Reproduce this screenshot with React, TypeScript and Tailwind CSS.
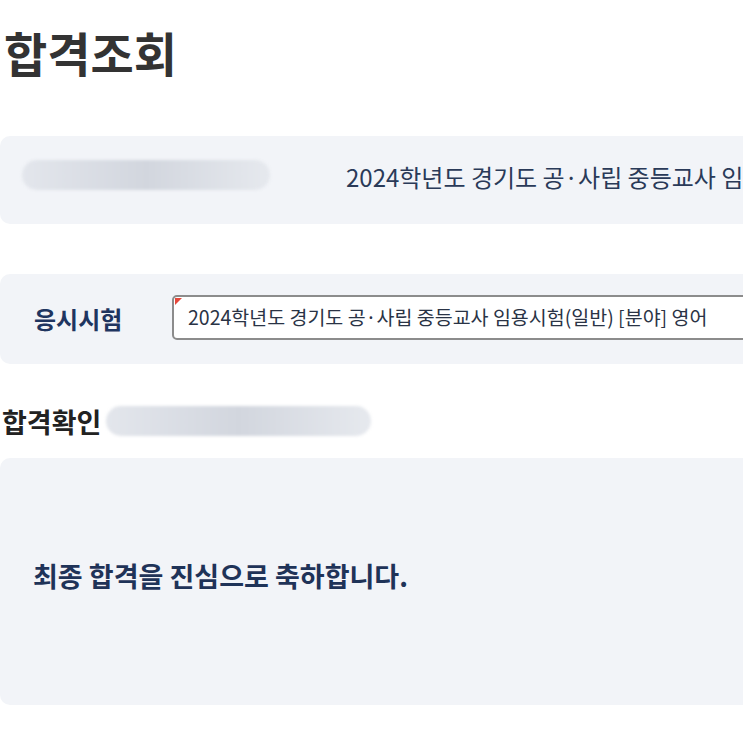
const font = { fontFamily: '"Noto Sans CJK KR", "Noto Sans", sans-serif' }

function Blur({ className }: { className: string }) {
  return (
    <div
      className={
        "rounded-full bg-gradient-to-r from-[#e3e6ec] via-[#d2d6de] to-[#e6e9ee] blur-[1.5px] " +
        className
      }
    />
  )
}

export default function App() {
  const exam = "2024학년도 경기도 공·사립 중등교사 임용시험(일반) [분야] 영어"

  return (
    <div className="w-[743px] h-[743px] overflow-hidden bg-white" style={font}>
      <div className="w-[1100px]">
        {/* 제목 */}
        <h1 className="pt-[28px] pl-[4px] text-[47px] leading-none font-bold text-[#333333]">
          합격조회
        </h1>

        {/* 수험자 정보 */}
        <div className="mt-[61px] h-[88px] rounded-l-[10px] bg-[#f2f4f8] flex items-center pl-[22px]">
          <Blur className="w-[248px] h-[30px] -mt-[10px]" />
          <span className="ml-[76px] -mt-[6px] text-[24px] text-[#2a3a58] whitespace-nowrap">{exam}</span>
        </div>

        {/* 응시시험 */}
        <div className="mt-[50px] h-[90px] rounded-l-[10px] bg-[#f2f4f8] flex items-center pl-[34px]">
          <span className="w-[138px] text-[24px] font-bold text-[#1f3560]">응시시험</span>
          <div className="relative flex-1 h-[45px] -mt-[4px] bg-white border-2 border-[#8c8c8c] rounded-[5px] flex items-center pl-[14px]">
            <span className="absolute left-[1px] top-[1px] w-0 h-0 border-t-[7px] border-t-[#e5483c] border-r-[7px] border-r-transparent" />
            <span className="text-[19.5px] text-[#2a3345] whitespace-nowrap">{exam}</span>
          </div>
        </div>

        {/* 합격확인 */}
        <div className="mt-[42px] flex items-center pl-[2px]">
          <h2 className="text-[27px] leading-none font-bold text-[#222222]">합격확인</h2>
          <Blur className="ml-[5px] w-[265px] h-[30px]" />
        </div>

        <div className="mt-[22px] h-[247px] rounded-l-[10px] bg-[#f2f4f8] flex items-center pl-[33px]">
          <p className="text-[27px] font-bold text-[#1f3358] mt-[-10px]">최종 합격을 진심으로 축하합니다.</p>
        </div>
      </div>
    </div>
  )
}
